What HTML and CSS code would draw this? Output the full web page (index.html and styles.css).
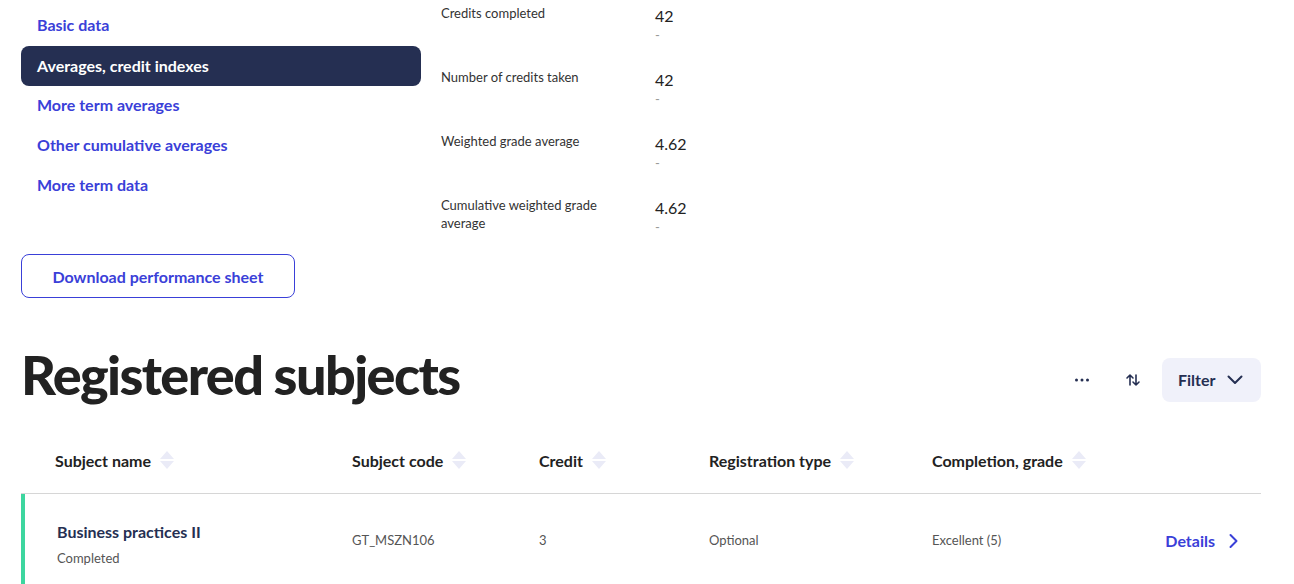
FILE: index.html
```html
<!DOCTYPE html>
<html lang="en">
<head>
<meta charset="utf-8">
<title>Registered subjects</title>
<link rel="stylesheet" href="styles.css">
</head>
<body>
<div class="page">
  <section class="top">
    <div class="side">
      <nav class="nav">
        <a class="nav-item">Basic data</a>
        <a class="nav-item active">Averages, credit indexes</a>
        <a class="nav-item">More term averages</a>
        <a class="nav-item">Other cumulative averages</a>
        <a class="nav-item">More term data</a>
      </nav>
      <button class="btn-outline">Download performance sheet</button>
    </div>
    <div class="stats">
      <div class="stat">
        <div class="stat-label">Credits completed</div>
        <div class="stat-val"><div class="num">42</div><div class="dash">-</div></div>
      </div>
      <div class="stat">
        <div class="stat-label">Number of credits taken</div>
        <div class="stat-val"><div class="num">42</div><div class="dash">-</div></div>
      </div>
      <div class="stat">
        <div class="stat-label">Weighted grade average</div>
        <div class="stat-val"><div class="num">4.62</div><div class="dash">-</div></div>
      </div>
      <div class="stat">
        <div class="stat-label">Cumulative weighted grade average</div>
        <div class="stat-val"><div class="num">4.62</div><div class="dash">-</div></div>
      </div>
    </div>
  </section>

  <section class="subjects">
    <div class="head-row">
      <h1 class="title">Registered subjects</h1>
      <div class="tools">
        <button class="icon-btn" aria-label="More">
          <svg width="16" height="4" viewBox="0 0 16 4"><circle cx="2.5" cy="2" r="1.5" fill="#252f52"/><circle cx="8" cy="2" r="1.5" fill="#252f52"/><circle cx="13.5" cy="2" r="1.5" fill="#252f52"/></svg>
        </button>
        <button class="icon-btn" aria-label="Sort">
          <svg width="16" height="16" viewBox="0 0 16 16" fill="none" stroke="#252f52" stroke-width="1.6" stroke-linecap="round" stroke-linejoin="round"><path d="M5 13V3M2 6l3-3 3 3"/><path d="M11 3v10M8 10l3 3 3-3"/></svg>
        </button>
        <button class="filter-btn">Filter
          <svg width="16" height="10" viewBox="0 0 16 10" fill="none" stroke="#252f52" stroke-width="2" stroke-linecap="round" stroke-linejoin="round"><path d="M1.5 1.5l6.5 6.5 6.5-6.5"/></svg>
        </button>
      </div>
    </div>

    <div class="table">
      <div class="thead">
        <div class="th c1">Subject name<svg class="sort" width="16" height="20" viewBox="0 0 16 20"><path d="M8 1l7 8H1z" fill="#eaebf7"/><path d="M8 19l7-8H1z" fill="#eaebf7"/></svg></div>
        <div class="th">Subject code<svg class="sort" width="16" height="20" viewBox="0 0 16 20"><path d="M8 1l7 8H1z" fill="#eaebf7"/><path d="M8 19l7-8H1z" fill="#eaebf7"/></svg></div>
        <div class="th">Credit<svg class="sort" width="16" height="20" viewBox="0 0 16 20"><path d="M8 1l7 8H1z" fill="#eaebf7"/><path d="M8 19l7-8H1z" fill="#eaebf7"/></svg></div>
        <div class="th">Registration type<svg class="sort" width="16" height="20" viewBox="0 0 16 20"><path d="M8 1l7 8H1z" fill="#eaebf7"/><path d="M8 19l7-8H1z" fill="#eaebf7"/></svg></div>
        <div class="th">Completion, grade<svg class="sort" width="16" height="20" viewBox="0 0 16 20"><path d="M8 1l7 8H1z" fill="#eaebf7"/><path d="M8 19l7-8H1z" fill="#eaebf7"/></svg></div>
        <div class="th"></div>
      </div>
      <div class="trow">
        <div class="td c1">
          <div class="subj-name">Business practices II</div>
          <div class="subj-status">Completed</div>
        </div>
        <div class="td cell">GT_MSZN106</div>
        <div class="td cell">3</div>
        <div class="td cell">Optional</div>
        <div class="td cell">Excellent (5)</div>
        <div class="td act">
          <a class="details">Details
            <svg width="10" height="16" viewBox="0 0 10 16" fill="none" stroke="#3a40d8" stroke-width="2" stroke-linecap="round" stroke-linejoin="round"><path d="M2.5 2l6 6-6 6"/></svg>
          </a>
        </div>
      </div>
    </div>
  </section>
</div>
</body>
</html>
```

FILE: styles.css
```css
* { box-sizing: border-box; }
html, body { margin: 0; padding: 0; background: #fff; }
body {
  font-family: Lato, "Liberation Sans", sans-serif;
  color: #222;
}
.page {
  width: 1240px;
  margin: 0 0 0 21px;
}
.top {
  display: flex;
  gap: 20px;
}
.side {
  width: 400px;
  padding-top: 5px;
}
.nav {
  display: flex;
  flex-direction: column;
}
.nav-item {
  display: flex;
  align-items: center;
  height: 40px;
  padding: 0 16px 1px;
  border-radius: 8px;
  font-size: 16px;
  font-weight: 700;
  color: #3a40d8;
  cursor: pointer;
}
.nav-item.active {
  margin: 1px 0 -1px;
  background: #252f52;
  color: #fff;
}
.btn-outline {
  margin-top: 49px;
  width: 274px;
  height: 44px;
  border: 1px solid #3a40d8;
  border-radius: 8px;
  background: #fff;
  color: #3a40d8;
  font-family: inherit;
  font-size: 16px;
  font-weight: 700;
  cursor: pointer;
}
.stats {
  padding-top: 4px;
  display: flex;
  flex-direction: column;
}
.stat {
  display: flex;
  height: 64px;
}
.stat-label {
  width: 214px;
  padding-right: 30px;
  font-size: 13px;
  line-height: 18px;
  color: #333;
}
.stat-val { padding-top: 2px; }
.num {
  font-size: 16px;
  line-height: 20px;
  color: #222;
}
.dash {
  font-size: 13px;
  line-height: 18px;
  color: #999;
}
.head-row {
  margin-top: 45px;
  display: flex;
  align-items: center;
  justify-content: space-between;
}
.title {
  margin: 0;
  font-size: 54px;
  line-height: 1.2;
  font-weight: 900;
  letter-spacing: -1.6px;
  color: #222;
}
.tools {
  display: flex;
  align-items: center;
  gap: 7px;
  padding-top: 9px;
}
.icon-btn {
  width: 44px;
  height: 44px;
  border: 0;
  background: transparent;
  display: flex;
  align-items: center;
  justify-content: center;
  padding: 0;
  cursor: pointer;
}
.filter-btn {
  height: 44px;
  width: 99px;
  border: 0;
  border-radius: 8px;
  background: #f0f1fa;
  display: flex;
  align-items: center;
  gap: 12px;
  padding: 0 0 0 16px;
  font-family: inherit;
  font-size: 16px;
  font-weight: 700;
  color: #252f52;
  cursor: pointer;
}
.table { margin-top: 20px; }
.thead, .trow {
  display: grid;
  grid-template-columns: 331px 187px 170px 223px 200px 1fr;
}
.thead {
  height: 66px;
  border-bottom: 1px solid #d6d6d6;
  align-items: center;
}
.th {
  display: flex;
  align-items: center;
  font-size: 16px;
  font-weight: 700;
  color: #222;
}
.th.c1 { padding-left: 34px; }
.sort {
  margin-left: 8px;
  display: block;
}
.trow {
  border-left: 4px solid #3dd69f;
  grid-template-columns: 327px 187px 170px 223px 200px 1fr;
  padding-top: 28px;
  min-height: 92px;
  align-items: start;
}
.td.c1 { padding-left: 32px; }
.subj-name {
  font-size: 16px;
  line-height: 20px;
  font-weight: 700;
  color: #252f52;
}
.subj-status {
  margin-top: 7px;
  font-size: 13px;
  line-height: 18px;
  color: #555;
}
.cell {
  padding-top: 9px;
  font-size: 13px;
  line-height: 18px;
  color: #555;
}
.act {
  display: flex;
  justify-content: flex-end;
  padding-top: 9px;
  padding-right: 23px;
}
.details {
  display: flex;
  align-items: center;
  gap: 13px;
  font-size: 16px;
  line-height: 20px;
  font-weight: 700;
  color: #3a40d8;
  cursor: pointer;
}
```
